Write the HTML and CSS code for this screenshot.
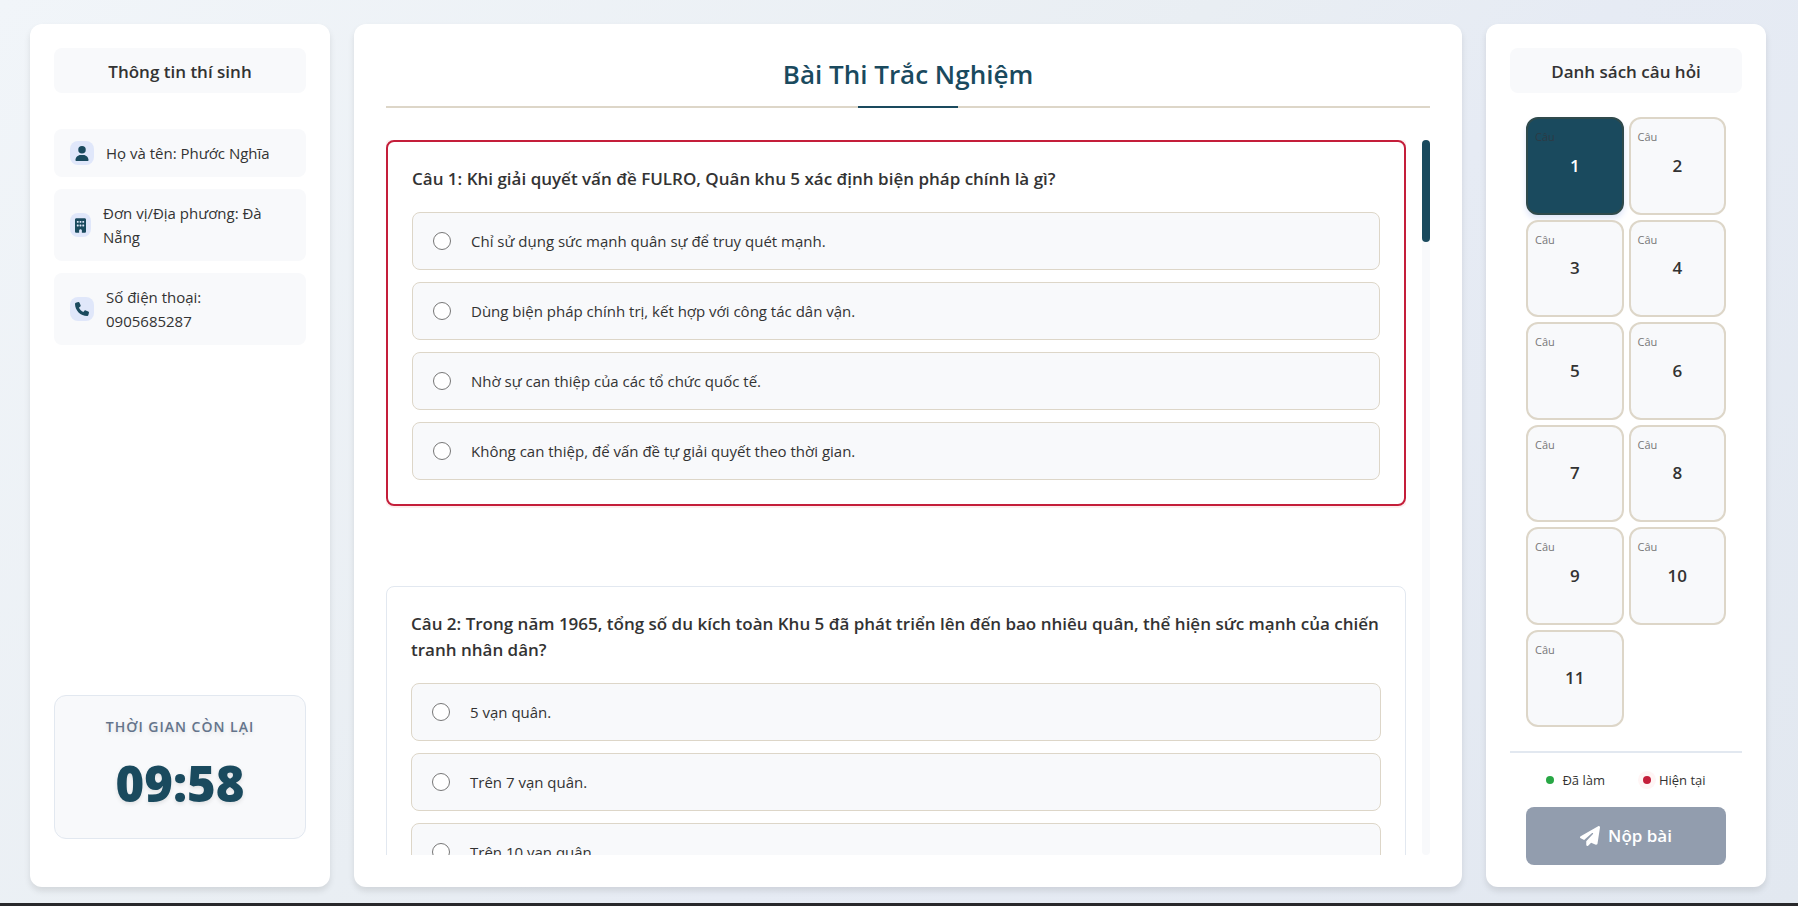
FILE: index.html
```html
<!DOCTYPE html>
<html lang="vi">
<head>
  <meta charset="UTF-8" />
  <meta name="viewport" content="width=device-width, initial-scale=1.0" />
  <title>Bài Thi Trắc Nghiệm</title>
  <link rel="stylesheet" href="styles.css">
</head>
<body>
  <div class="exam-layout">
    <!-- Candidate info -->
    <aside class="card sidebar">
      <h3 class="panel-title">Thông tin thí sinh</h3>
      <ul class="info-list">
        <li class="info-item">
          <span class="info-icon">
            <svg width="14" height="15" viewBox="0 0 448 512"><path d="M224 256A128 128 0 1 0 224 0a128 128 0 1 0 0 256zm-45.700 48C79.800 304 0 383.800 0 482.300C0 498.700 13.300 512 29.700 512H418.300c16.400 0 29.700-13.300 29.700-29.700C448 383.800 368.200 304 269.700 304H178.300z"/></svg>
          </span>
          <span>Họ và tên: Phước Nghĩa</span>
        </li>
        <li class="info-item">
          <span class="info-icon">
            <svg width="11" height="15" viewBox="0 0 384 512"><path d="M48 0C21.500 0 0 21.500 0 48V464c0 26.500 21.500 48 48 48h96V432c0-26.500 21.500-48 48-48s48 21.500 48 48v80h96c26.500 0 48-21.500 48-48V48c0-26.500-21.500-48-48-48H48zM64 240c0-8.800 7.200-16 16-16h32c8.800 0 16 7.200 16 16v32c0 8.800-7.200 16-16 16H80c-8.800 0-16-7.200-16-16V240zm112-16h32c8.800 0 16 7.200 16 16v32c0 8.800-7.200 16-16 16H176c-8.800 0-16-7.200-16-16V240c0-8.800 7.200-16 16-16zm80 16c0-8.800 7.200-16 16-16h32c8.800 0 16 7.200 16 16v32c0 8.800-7.200 16-16 16H272c-8.800 0-16-7.200-16-16V240zM80 96h32c8.800 0 16 7.200 16 16v32c0 8.800-7.200 16-16 16H80c-8.800 0-16-7.200-16-16V112c0-8.800 7.200-16 16-16zm80 16c0-8.800 7.200-16 16-16h32c8.800 0 16 7.200 16 16v32c0 8.800-7.200 16-16 16H176c-8.800 0-16-7.200-16-16V112zM272 96h32c8.800 0 16 7.200 16 16v32c0 8.800-7.200 16-16 16H272c-8.800 0-16-7.200-16-16V112c0-8.800 7.200-16 16-16z"/></svg>
          </span>
          <span>Đơn vị/Địa phương: Đà Nẵng</span>
        </li>
        <li class="info-item">
          <span class="info-icon">
            <svg width="14" height="14" viewBox="0 0 512 512"><path d="M164.900 24.600c-7.700-18.600-28-28.500-47.400-23.200l-88 24C12.100 30.200 0 46 0 64C0 311.400 200.600 512 448 512c18 0 33.800-12.100 38.600-29.500l24-88c5.300-19.400-4.600-39.700-23.200-47.400l-96-40c-16.300-6.800-35.200-2.100-46.300 11.600L304.700 368C234.300 334.700 177.300 277.700 144 207.300L193.300 167c13.700-11.200 18.400-30 11.600-46.300l-40-96z"/></svg>
          </span>
          <span>Số điện thoại: 0905685287</span>
        </li>
      </ul>
      <div class="timer">
        <div class="timer-label">Thời gian còn lại</div>
        <div class="timer-value" id="timer">09:58</div>
      </div>
    </aside>

    <!-- Questions -->
    <main class="card exam">
      <h1 class="exam-title">Bài Thi Trắc Nghiệm</h1>
      <div class="question-area">
        <div class="question-list">
          <section class="question current">
            <h4 id="q1">Câu 1: Khi giải quyết vấn đề FULRO, Quân khu 5 xác định biện pháp chính là gì?</h4>
            <div class="options" role="radiogroup" aria-labelledby="q1">
              <label class="option"><input type="radio" name="q1" value="A" /><span>Chỉ sử dụng sức mạnh quân sự để truy quét mạnh.</span></label>
              <label class="option"><input type="radio" name="q1" value="B" /><span>Dùng biện pháp chính trị, kết hợp với công tác dân vận.</span></label>
              <label class="option"><input type="radio" name="q1" value="C" /><span>Nhờ sự can thiệp của các tổ chức quốc tế.</span></label>
              <label class="option"><input type="radio" name="q1" value="D" /><span>Không can thiệp, để vấn đề tự giải quyết theo thời gian.</span></label>
            </div>
          </section>
          <section class="question">
            <h4 id="q2">Câu 2: Trong năm 1965, tổng số du kích toàn Khu 5 đã phát triển lên đến bao nhiêu quân, thể hiện sức mạnh của chiến tranh nhân dân?</h4>
            <div class="options" role="radiogroup" aria-labelledby="q2">
              <label class="option"><input type="radio" name="q2" value="A" /><span>5 vạn quân.</span></label>
              <label class="option"><input type="radio" name="q2" value="B" /><span>Trên 7 vạn quân.</span></label>
              <label class="option"><input type="radio" name="q2" value="C" /><span>Trên 10 vạn quân.</span></label>
            </div>
          </section>
        </div>
        <div class="scroll-track"><div class="scroll-thumb"></div></div>
      </div>
    </main>

    <!-- Question navigation -->
    <aside class="card nav-panel">
      <h3 class="panel-title">Danh sách câu hỏi</h3>
      <div class="question-grid">
        <button type="button" class="grid-item active"><small>Câu</small>1</button>
        <button type="button" class="grid-item"><small>Câu</small>2</button>
        <button type="button" class="grid-item"><small>Câu</small>3</button>
        <button type="button" class="grid-item"><small>Câu</small>4</button>
        <button type="button" class="grid-item"><small>Câu</small>5</button>
        <button type="button" class="grid-item"><small>Câu</small>6</button>
        <button type="button" class="grid-item"><small>Câu</small>7</button>
        <button type="button" class="grid-item"><small>Câu</small>8</button>
        <button type="button" class="grid-item"><small>Câu</small>9</button>
        <button type="button" class="grid-item"><small>Câu</small>10</button>
        <button type="button" class="grid-item"><small>Câu</small>11</button>
      </div>
      <div class="legend">
        <span class="legend-item"><i class="dot done"></i>Đã làm</span>
        <span class="legend-item"><i class="dot now"></i>Hiện tại</span>
      </div>
      <button type="submit" class="submit-btn">
        <svg width="20" height="20" viewBox="0 0 512 512"><path d="M498.100 5.600c10.100 7 15.400 19.100 13.500 31.200l-64 416c-1.500 9.700-7.400 18.200-16 23s-18.900 5.400-28 1.600L284 427.700l-68.500 74.100c-8.900 9.700-22.900 12.900-35.200 8.100S160 493.200 160 480V396.400c0-4 1.500-7.800 4.200-10.700L331.800 202.800c5.800-6.300 5.600-16-.4-22s-15.700-6.400-22-.7L106 360.800 17.700 316.600C7.100 311.300 .3 300.700 0 288.900s5.900-22.800 16.100-28.700l448-256c10.700-6.100 23.900-5.500 34 1.400z"/></svg>
        Nộp bài
      </button>
    </aside>
  </div>
  <footer class="bottom-bar"></footer>
</body>
</html>
```
FILE: styles.css
```css
/* Reset */
*, *::before, *::after {
  margin: 0;
  padding: 0;
  box-sizing: border-box;
}

body {
  height: 100vh;
  display: flex;
  flex-direction: column;
  font-family: "Segoe UI", "Open Sans", "Noto Sans", sans-serif;
  font-size: 15px;
  line-height: 24px;
  color: #333;
  background: linear-gradient(135deg, #f1f5f9 0%, #e9eef3 45%, #e6ebf4 60%, #e2e8f0 100%);
}

button, input {
  font: inherit;
  color: inherit;
}

.exam-layout {
  flex: 1;
  min-height: 0;
  display: grid;
  grid-template-columns: 300px 1fr 280px;
  gap: 24px;
  padding: 24px 32px 16px 30px;
}

.card {
  min-height: 0;
  display: flex;
  flex-direction: column;
  background: #fff;
  border-radius: 12px;
  box-shadow: 0 4px 6px rgba(0, 0, 0, 0.1);
}

.sidebar, .nav-panel {
  padding: 24px;
}

.panel-title {
  padding: 11px 10px 9px;
  font-size: 17px;
  line-height: 25px;
  font-weight: 600;
  text-align: center;
  background: #f8f9fb;
  border-radius: 8px;
}

/* Candidate info */
.info-list {
  list-style: none;
  display: flex;
  flex-direction: column;
  gap: 12px;
  margin-top: 36px;
}

.info-item {
  display: flex;
  align-items: center;
  gap: 12px;
  padding: 12px 16px;
  background: #f8f9fb;
  border-radius: 8px;
}

.info-icon {
  flex: none;
  display: flex;
  align-items: center;
  height: 24px;
  padding: 0 5px;
  background: #e0e7fa;
  border-radius: 8px;
  fill: #1a4a5e;
}

.timer {
  margin: auto 0 24px;
  padding: 19px 24px;
  text-align: center;
  background: #f8f9fb;
  border: 1px solid #e2e8f0;
  border-radius: 12px;
  text-shadow: 0 2px 4px rgba(0, 0, 0, 0.1);
}

.timer-label {
  font-size: 14px;
  font-weight: 600;
  letter-spacing: 1px;
  text-transform: uppercase;
  color: #64748b;
}

.timer-value {
  margin-top: 8px;
  font-size: 49px;
  line-height: 72px;
  font-weight: 800;
  color: #1a4a5e;
}

/* Exam */
.exam {
  padding: 32px;
}

.exam-title {
  position: relative;
  padding-bottom: 14px;
  margin-bottom: 32px;
  font-size: 26px;
  line-height: 36px;
  font-weight: 600;
  text-align: center;
  color: #1a4a5e;
  border-bottom: 2px solid #ddd6c8;
}

.exam-title::after {
  content: "";
  position: absolute;
  bottom: -2px;
  left: 50%;
  width: 100px;
  height: 2px;
  margin-left: -50px;
  background: #1a4a5e;
}

.question-area {
  flex: 1;
  min-height: 0;
  display: flex;
  gap: 16px;
}

.question-list {
  flex: 1;
  overflow: hidden;
}

.question {
  margin-bottom: 80px;
  padding: 24px;
  border: 1px solid #e2e8f0;
  border-radius: 8px;
}

.question.current {
  border: 2px solid #c41e3a;
  box-shadow: 0 0 0 2px #fdeeee;
}

.question h4 {
  margin-bottom: 20px;
  font-size: 17px;
  line-height: 26px;
  font-weight: 600;
}

.options {
  display: flex;
  flex-direction: column;
  gap: 12px;
}

.option {
  display: flex;
  align-items: center;
  gap: 20px;
  padding: 16px 20px;
  background: #f8f9fb;
  border: 1px solid #ddd6c8;
  border-radius: 8px;
  cursor: pointer;
}

.option input {
  width: 18px;
  height: 18px;
}

.scroll-track {
  width: 8px;
  background: #f8f9fb;
  border-radius: 4px;
}

.scroll-thumb {
  height: 102px;
  background: #1a4a5e;
  border-radius: 4px;
}

/* Navigation */
.question-grid {
  display: grid;
  grid-template-columns: 1fr 1fr;
  gap: 5px;
  padding: 24px 16px;
}

.grid-item {
  position: relative;
  aspect-ratio: 1;
  font-size: 17px;
  font-weight: 600;
  background: #f8f9fb;
  border: 2px solid #ddd6c8;
  border-radius: 12px;
  cursor: pointer;
}

.grid-item small {
  position: absolute;
  top: 10px;
  left: 7px;
  font-size: 11px;
  line-height: 16px;
  font-weight: 400;
  color: #777;
}

.grid-item.active {
  color: #fff;
  background: #1a4a5e;
  border-color: #2f4a4c;
  box-shadow: 0 4px 6px #e0e7fa;
}

.grid-item.active small {
  color: #2c3a44;
}

.legend {
  display: flex;
  justify-content: center;
  gap: 38px;
  padding: 16px 0;
  font-size: 13px;
  line-height: 22px;
  border-top: 2px solid #e2e8f0;
}

.legend-item {
  display: flex;
  align-items: center;
  gap: 8px;
}

.dot {
  width: 8px;
  height: 8px;
  border-radius: 50%;
}

.dot.done {
  background: #28a745;
}

.dot.now {
  background: #c41e3a;
  box-shadow: 0 0 0 5px #fff5f5;
}

.submit-btn {
  display: flex;
  align-items: center;
  justify-content: center;
  gap: 8px;
  min-height: 58px;
  margin: 0 16px;
  font-size: 17px;
  font-weight: 600;
  color: #fff;
  fill: #fff;
  background: #929dae;
  border: none;
  border-radius: 8px;
  cursor: pointer;
}

.bottom-bar {
  height: 3px;
  background: #28282b;
}

@media (max-width: 1024px) {
  body {
    height: auto;
  }

  .exam-layout {
    grid-template-columns: 1fr;
  }

  .timer {
    margin-top: 24px;
  }
}
```
